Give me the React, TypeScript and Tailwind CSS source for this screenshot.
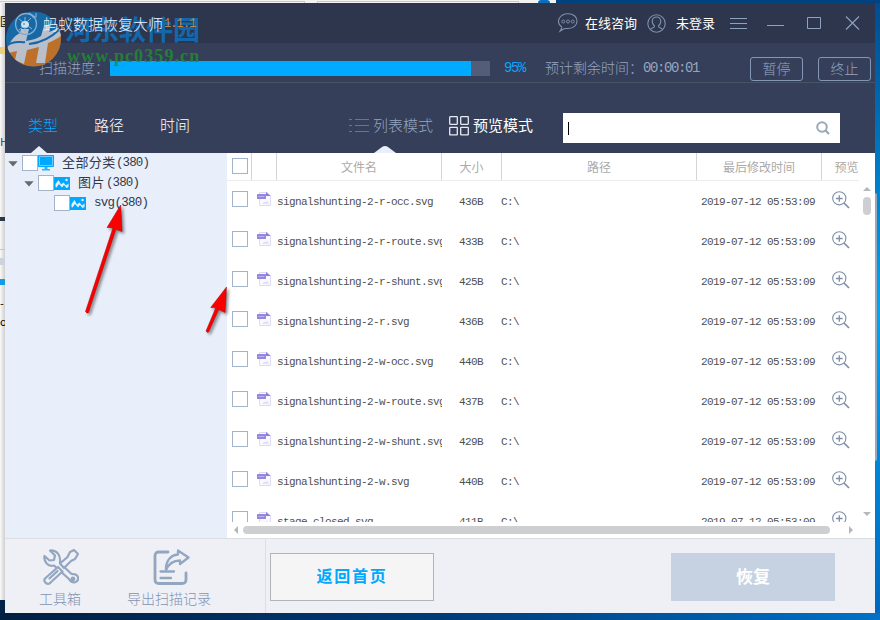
import React from "react";

const CJK = "font-['Noto_Sans_CJK_SC',sans-serif]";
const MONO = "font-['Liberation_Mono','Noto_Sans_CJK_SC',monospace]";

const files = [
  ["signalshunting-2-r-occ.svg", "436B"],
  ["signalshunting-2-r-route.svg", "433B"],
  ["signalshunting-2-r-shunt.svg", "425B"],
  ["signalshunting-2-r.svg", "436B"],
  ["signalshunting-2-w-occ.svg", "440B"],
  ["signalshunting-2-w-route.svg", "437B"],
  ["signalshunting-2-w-shunt.svg", "429B"],
  ["signalshunting-2-w.svg", "440B"],
  ["stage-closed.svg", "411B"],
];

function Checkbox() {
  return <span className="block h-4 w-4 shrink-0 border border-[#a3b3ca] bg-white" />;
}

function FileIcon() {
  return (
    <svg width="15" height="16" viewBox="0 0 15 16" className="shrink-0">
      <path d="M2.5 1.5V14.5H13.5V4.5L10 1.5Z" fill="#faf9ff" stroke="#dedaf2" />
      <path d="M9 1L13.500 5H9Z" fill="#8c7bdc" />
      <rect x="0" y="3" width="9" height="5" rx="0.5" fill="#9686de" />
      <path d="M1.500 5.500H7.500" stroke="#bbb0ee" />
      <path d="M5 13L7 10.500L8.500 11L10 9.500L12 13Z" fill="#e5e0fb" />
    </svg>
  );
}

function ZoomIcon() {
  return (
    <svg width="18" height="18" viewBox="0 0 18 18" fill="none" stroke="#7f8fa8" className="shrink-0">
      <circle cx="7.3" cy="7.3" r="6.6" strokeWidth="1.1" />
      <path d="M4 7.5H10.6M7.3 4.2V10.8" strokeWidth="1.3" />
      <path d="M12 12L17 17" strokeWidth="1.7" />
    </svg>
  );
}

function PictureIcon() {
  return (
    <svg width="16" height="16" viewBox="0 0 16 16" className="shrink-0">
      <rect x="0" y="2" width="16" height="13" fill="#00a8ff" />
      <path d="M1.500 12V9L4.500 5L7 9.500L9.500 7.500L12 10.500L14.500 8.500V12L12.500 13L10 10L8 12.500L5 9L2.500 12.500Z" fill="#e8effa" />
      <circle cx="12.500" cy="5" r="1.200" fill="#e8effa" />
    </svg>
  );
}

function MonitorIcon() {
  return (
    <svg width="16" height="16" viewBox="0 0 16 16" className="shrink-0">
      <path d="M.5 .5H15.5V11.5H.5Z" fill="#00a8ff" stroke="#00a8ff" />
      <path d="M1.5 1.5H14.5V10.5H1.5Z" fill="none" stroke="#8bd4fb" strokeWidth=".8" />
      <path d="M6.5 12H9.5V14H12V15.5H4V14H6.5Z" fill="#2bb3fb" />
    </svg>
  );
}

function Caret() {
  return (
    <svg width="10" height="6" viewBox="0 0 10 6" className="mt-0.5 shrink-0">
      <path d="M.3 .2H9.7L5 5.4Z" fill="#67696d" />
    </svg>
  );
}

function HeadCell({ w, children, last }: { w: string; children?: React.ReactNode; last?: boolean }) {
  return (
    <div className={`flex h-full shrink-0 items-center justify-center ${last ? "" : "border-r border-[#d5d5d5]"} ${w}`}>
      {children}
    </div>
  );
}

function TitleBar() {
  return (
    <div className="flex h-10 shrink-0 items-center bg-[#2d364c] text-white">
      <div className="relative z-10 ml-[38px] mt-px flex w-[515px] items-center">
        <span className="text-[15px] font-light leading-5 text-[#eef2f7]">蚂蚁数据恢复大师</span>
        <span className={`ml-px text-[12px] leading-5 tracking-[-0.9px] text-[#b98a4c] ${MONO}`}>1.1.1</span>
      </div>
      <svg width="20" height="20" viewBox="0 0 20 20" fill="none" stroke="#7f90a9" className="shrink-0">
        <path d="M4 14.5C-3 9 1.500 .7 10 .7C22 .7 22 15.500 10 15.500C8 15.500 7 15.300 6 15.800L2 18.200L4 14.500" strokeWidth="1.1" />
        <circle cx="5.300" cy="8.500" r="1.500" /><circle cx="10" cy="8.500" r="1.500" /><circle cx="14.700" cy="8.500" r="1.500" />
      </svg>
      <span className="-mt-px ml-[7px] w-[52px] whitespace-nowrap text-[13px] leading-5">在线咨询</span>
      <svg width="19" height="19" viewBox="0 0 19 19" fill="none" stroke="#7f90a9" className="ml-2.5 shrink-0">
        <circle cx="9.500" cy="9.500" r="8.700" strokeWidth="1.100" />
        <path d="M3.500 15.500C4.500 13.500 8 14 7.500 12C4 9 4.500 3 9.500 3C14.500 3 15 9 11.500 12C11 14 14.500 13.500 15.500 15.500" strokeWidth="1.100" />
      </svg>
      <span className="-mt-px ml-[10px] w-[39px] whitespace-nowrap text-[13px] leading-5">未登录</span>
      <svg width="130" height="16" viewBox="0 0 130 16" fill="none" stroke="#8fa2bd" className="ml-[15px] shrink-0">
        <path d="M0 3.500H17M0 8.500H17M0 13.500H17M37 10.500H54M77.500 2.500H90.500V13.500H77.500Z" />
        <path d="M116 1.500L129 14.500M129 1.500L116 14.500" strokeWidth="1.100" />
      </svg>
    </div>
  );
}

function Progress() {
  return (
    <div className="flex h-10 shrink-0 items-center border-b border-[#495365] bg-[#363f59] text-[14px] font-light leading-5 text-[#94a5c0]">
      <span className="ml-[34px] mt-[9px] w-[71px] whitespace-nowrap">扫描进度：</span>
      <div className="mt-[11px] h-[15px] w-[380px] bg-[#535d77]">
        <div className="h-full w-[361px] bg-[#00aaff]" />
      </div>
      <span className={`ml-[14px] mt-[11px] w-[41px] tracking-[-1.4px] text-[#00a8ff] ${MONO}`}>95%</span>
      <span className="mt-[9px] w-[98px] whitespace-nowrap">预计剩余时间：</span>
      <span className={`mt-[11px] w-[107px] tracking-[-1.4px] ${MONO}`}>00:00:01</span>
      <button className="mt-[13px] flex h-6 w-[53px] justify-center rounded-[3px] border border-[#8397b5]">暂停</button>
      <button className="ml-[15px] mt-[13px] flex h-6 w-[53px] justify-center rounded-[3px] border border-[#8397b5]">终止</button>
    </div>
  );
}

function Toolbar() {
  return (
    <div className="relative flex h-[70px] shrink-0 items-center bg-[#363f59] text-[15px] leading-5 text-white">
      <span className="ml-[23px] mt-3.5 w-[66px] font-light text-[#00a8ff]">类型</span>
      <span className="mt-3.5 w-[66px] font-light">路径</span>
      <span className="mt-3.5 w-[188px] font-light">时间</span>
      <svg width="21" height="14" viewBox="0 0 21 14" stroke="#1690dc" className="mt-4 shrink-0">
        <path d="M1 .5H4M7 .5H21M1 6.500H4M7 6.500H21M1 12.500H4M7 12.500H21" />
      </svg>
      <span className="ml-1 mt-3.5 w-[60px] whitespace-nowrap font-light text-[#94a5c0]">列表模式</span>
      <svg width="20" height="20" viewBox="0 0 20 20" fill="none" stroke="#e7eaf0" strokeWidth="1.300" className="ml-4 mt-4 shrink-0">
        <rect x=".7" y=".7" width="7.600" height="7.600" rx=".5" /><rect x="11.700" y=".7" width="7.600" height="7.600" rx=".5" />
        <rect x=".7" y="11.300" width="7.600" height="7.600" rx=".5" /><rect x="11.700" y="11.300" width="7.600" height="7.600" rx=".5" />
      </svg>
      <span className="ml-1 mt-3.5 w-[60px] whitespace-nowrap">预览模式</span>
      <div className="ml-[30px] mt-5 flex h-[30px] w-[277px] items-center bg-white">
        <span className="ml-[5px] block h-[13px] w-px bg-black" />
        <svg width="14" height="14" viewBox="0 0 14 14" fill="none" stroke="#9aa8ba" className="ml-[247px] shrink-0">
          <circle cx="6" cy="6" r="4.800" strokeWidth="2" />
          <path d="M9.500 9.500L13 13" strokeWidth="2.300" />
        </svg>
      </div>
      <svg width="16" height="7" className="absolute bottom-0 left-[26px]"><path d="M0 7L8 0L16 7Z" fill="#e8effa" /></svg>
      <svg width="22" height="7" className="absolute bottom-0 left-[369px]"><path d="M0 7L8 1Q11 -1 14 1L22 7Z" fill="#e8effa" /></svg>
    </div>
  );
}

function Sidebar() {
  const count = `text-[12.5px] tracking-[-0.9px] ${MONO}`;
  return (
    <div className="flex w-[222px] shrink-0 flex-col bg-[#e8effa] text-[13px] text-[#30394d]">
      <div className="flex h-5 items-center pl-[3px]">
        <Caret /><span className="w-1" /><Checkbox /><MonitorIcon />
        <span className="mb-0.5 ml-2 w-[54px] leading-5 tracking-[0.4px]">全部分类</span><span className={count}>(380)</span>
      </div>
      <div className="flex h-5 items-center pl-[19px]">
        <Caret /><span className="w-1" /><Checkbox /><PictureIcon />
        <span className="mb-0.5 ml-2 w-7 leading-5 tracking-[0.4px]">图片</span><span className={count}>(380)</span>
      </div>
      <div className="flex h-5 items-center pl-[49px]">
        <Checkbox /><PictureIcon />
        <span className={`ml-2 text-[12.5px] tracking-[-0.7px] ${MONO}`}>svg(380)</span>
      </div>
    </div>
  );
}

function Table() {
  return (
    <div className="flex w-[648px] shrink-0 flex-col bg-white">
      <div className="flex h-[369px]">
        <div className="flex w-[632px] flex-col overflow-hidden">
          <div className="flex h-7 shrink-0 items-center border-b border-[#ededed] text-[12px] leading-5 text-[#aaa]">
            <HeadCell w="w-[25px] pl-0.5 pb-0.5"><Checkbox /></HeadCell>
            <HeadCell w="w-[25px]" />
            <HeadCell w="w-[165px]">文件名</HeadCell>
            <HeadCell w="w-[60px]">大小</HeadCell>
            <HeadCell w="w-[195px]">路径</HeadCell>
            <HeadCell w="w-[125px]">最后修改时间</HeadCell>
            <HeadCell w="w-[37px] pl-3" last><span className="whitespace-nowrap">预览</span></HeadCell>
          </div>
          {files.map(([name, size]) => (
            <div key={name} className={`flex h-10 shrink-0 items-center text-[11px] leading-5 tracking-[-0.6px] text-[#505050] ${MONO}`}>
              <div className="mb-1 ml-[5px] w-[25px] shrink-0"><Checkbox /></div>
              <div className="mb-1 w-5 shrink-0"><FileIcon /></div>
              <div className="mt-0.5 w-[165px] shrink-0 overflow-hidden whitespace-nowrap">{name}</div>
              <div className="mt-0.5 w-[59px] shrink-0 pl-[17px]">{size}</div>
              <div className="mt-0.5 w-[200px] shrink-0">C:\</div>
              <div className="mt-0.5 w-[131px] shrink-0 whitespace-nowrap">2019-07-12 05:53:09</div>
              <div className="mb-0.5"><ZoomIcon /></div>
            </div>
          ))}
        </div>
        <div className="flex w-4 flex-col items-center pt-[34px]">
          <svg width="8" height="4"><path d="M0 4L4 0L8 4Z" fill="#b4b7bb" /></svg>
          <div className="mt-1.5 h-[18px] w-2 rounded-full bg-[#cdcfd2]" />
          <svg width="8" height="4" className="mt-[297px]"><path d="M0 0H8L4 4Z" fill="#b4b7bb" /></svg>
        </div>
      </div>
      <div className="flex h-4 items-center pl-1.5">
        <svg width="5" height="8"><path d="M5 0L1 4L5 8Z" fill="#b4b7bb" /></svg>
        <div className="ml-[5px] h-2 w-[587px] rounded-full bg-[#cdcfd0]" />
        <svg width="5" height="8" className="ml-[19px]"><path d="M0 0L4 4L0 8Z" fill="#b4b7bb" /></svg>
      </div>
    </div>
  );
}

function Footer() {
  return (
    <div className="flex h-[75px] shrink-0 border-t border-[#dcdfe2] bg-[#eff0f6] text-[14px] leading-5 text-[#8294b2]">
      <div className="flex w-[261px] border-r border-[#dcdfe2] pt-2.5">
        <div className="ml-[34px] flex w-[42px] flex-col items-center">
          <svg width="36" height="36" viewBox="0 0 36 36" fill="none" stroke="#93a6c0" strokeWidth="2.200" strokeLinejoin="round" strokeLinecap="round" className="ml-0.5">
            <path d="M1.500 7C.5 13 5 18 11 16.500L26 30C31 37 38 31 34 26.500C32 24 29.500 26 28 24.500L17 14C18 6 14 1 7 1.500L12 6.500L11 11L6.500 11.500Z" />
            <path d="M17 14.500L24.500 8L27 3L31 1L35 5L32 10L28 12L21 19Z" fill="#eff0f6" />
            <path d="M15 18L2 29.500C0 32 3.500 36 6.500 34.500L19.500 22.500Z" fill="#eff0f6" />
            <path d="M14.500 22L6.500 29.500" /><circle cx="30" cy="30" r="1.300" fill="#93a6c0" />
          </svg>
          <span className="mt-[3px] whitespace-nowrap font-light">工具箱</span>
        </div>
        <div className="ml-[46px] flex w-[84px] flex-col items-center">
          <svg width="37" height="36" viewBox="0 0 37 36" fill="none" stroke="#93a6c0" strokeWidth="2.800" strokeLinejoin="round" strokeLinecap="round" className="ml-1">
            <path d="M15 3H6Q2 3 2 7V30.500Q2 34.500 6 34.500H29Q33 34.500 33 30.500V24" />
            <path d="M13 21C12.500 13 17 6 25 5.500V1.500L35.500 8.500L27 15V11.500C19 11.500 15.500 15 13 21Z" strokeWidth="2.300" />
            <path d="M7.500 22.500H21M7.500 29H18" strokeWidth="2.300" />
          </svg>
          <span className="mt-[3px] whitespace-nowrap font-light">导出扫描记录</span>
        </div>
      </div>
      <button className="ml-1 mt-3.5 h-12 w-[164px] border border-[#b2b4b7] bg-[#f5f5f5] pb-1 text-[16px] font-bold tracking-[1.700px] text-[#00a8ff]">返回首页</button>
      <button className="ml-[237px] mt-3.5 h-12 w-[164px] bg-[#c6d2e1] pb-0.5 text-[17px] font-bold text-white">恢复</button>
    </div>
  );
}

function Logo() {
  return (
    <svg width="60" height="60" viewBox="0 0 60 60" className="absolute left-[5px] top-[9px]">
      <defs><clipPath id="disc"><circle cx="28.500" cy="30" r="27.500" /></clipPath></defs>
      <g clipPath="url(#disc)">
        <rect width="60" height="60" fill="#1768a4" />
        <path d="M0 42C20 42 36 36 60 20V60H0Z" fill="#bd7028" />
        <path d="M0 45C4 33 9 27 15 24L16 20H24L21 32C28 31 33 29 36 27L39 17L46 15L44 23C50 21 54 18 60 14V24C54 29 48 32 43 34L40 54H31L34 38L22 41L19 55L10 51L12 42C8 43 4 44 0 45Z" fill="#b9bfcb" />
        <path d="M3 36C10 31 16 34 20 33M24 35C36 34 48 27 56 19" fill="none" stroke="#1768a4" strokeWidth="2" />
      </g>
      <circle cx="21" cy="15" r="10.500" fill="none" stroke="#7faed1" strokeWidth="1.300" />
      <path d="M24 4L30 8M27 8H31V4" fill="none" stroke="#7faed1" strokeWidth="1.200" />
      <ellipse cx="20" cy="15.500" rx="4" ry="3.500" fill="#d2e1ed" />
      <path d="M14 10L18 13M14 21L18 18M26 9L22 13M27 20L23 17M20 8V12M20 23V18" stroke="#8bb7d8" />
      <circle cx="19" cy="15" r=".8" fill="#1768a4" />
    </svg>
  );
}

function Arrows() {
  return (
    <svg width="160" height="150" viewBox="80 195 160 150" className="absolute left-20 top-[195px] drop-shadow-[2px_2px_1.500px_rgba(0,0,0,0.45)]">
      <g fill="#fa0000" stroke="#a80000" strokeWidth=".5">
        <path d="M120.700 205L107 227.500L113 227.700L85.500 311.500Q87 314 88.500 312.500L116 229.300L122 231.500Z" />
        <path d="M226.500 287L210.700 307.500L215.800 307.800L206 331Q207.300 333.500 208.800 331.800L218.800 309.500L225 312.500Z" />
      </g>
    </svg>
  );
}

export default function App() {
  return (
    <div className={`relative flex h-[620px] w-[880px] flex-col overflow-hidden bg-[#012c5c] ${CJK}`}>
      <div className="flex h-[3px] shrink-0 bg-[#f2f2f2]">
        <div className="mt-px h-0.5 w-[305px] border-r border-t border-[#c9c9c9]" />
        <div className="ml-3 mt-px h-0.5 w-[202px] border-x border-t border-[#c9c9c9]" />
        <div className="ml-[19px] h-full w-3 rounded-t-full bg-[#0b6fc0]" />
        <div className="ml-1.5 h-full flex-1 bg-[#00427f]" />
      </div>
      <div className="flex h-[610px] shrink-0">
        <div className="flex w-[5px] flex-col overflow-hidden bg-gradient-to-r from-[#fafafa] to-[#cfcfcf] text-[11px] leading-3 text-black">
          <div className="h-3 shrink-0" />
          <div className="h-3 shrink-0 overflow-hidden">国</div>
          <div className="mt-[20px] h-[7px] shrink-0 bg-[#edcd7a]" />
          <div className="mt-[81px] h-3 shrink-0 text-[#1c3f86]">H</div>
          <div className="mt-[70px] h-1 shrink-0 bg-[#2d364c]" />
          <div className="mt-7 h-px shrink-0 bg-[#efb5b5]" />
          <div className="mt-2 h-[7px] shrink-0 bg-[#ccd3da]" />
          <div className="mt-3.5 h-[6px] shrink-0 bg-[#149de5]" />
          <div className="mt-3 h-3 shrink-0">-</div>
          <div className="mt-1.5 h-3 shrink-0">o</div>
          <div className="flex-1" />
          <div className="h-[13px] shrink-0 bg-[#012347]" />
        </div>
        <div className="flex w-[870px] shrink-0 flex-col">
          <TitleBar />
          <Progress />
          <Toolbar />
          <div className="flex h-[385px] shrink-0"><Sidebar /><Table /></div>
          <Footer />
        </div>
        <div className="flex w-[5px] flex-col bg-gradient-to-b from-[#004c91] via-[#00a5f2] to-[#0068be]">
          <div className="mt-[190px] h-[268px] w-0.5 rounded-r-sm bg-[#9aa7b8]" />
        </div>
      </div>
      <div className="h-[7px] shrink-0 bg-gradient-to-r from-[#011f40] via-[#003b78] to-[#0072c8]" />
      <Logo />
      <div className="absolute left-[65px] top-[13px] whitespace-nowrap text-[27px] font-bold leading-8 text-[#0c76c9]/80">河东软件园</div>
      <div className="absolute left-[67px] top-[46px] whitespace-nowrap font-['Liberation_Serif',serif] text-[18px] font-bold leading-5 tracking-[1.1px] text-[#218a35]/85">www.pc0359.cn</div>
      <Arrows />
    </div>
  );
}
